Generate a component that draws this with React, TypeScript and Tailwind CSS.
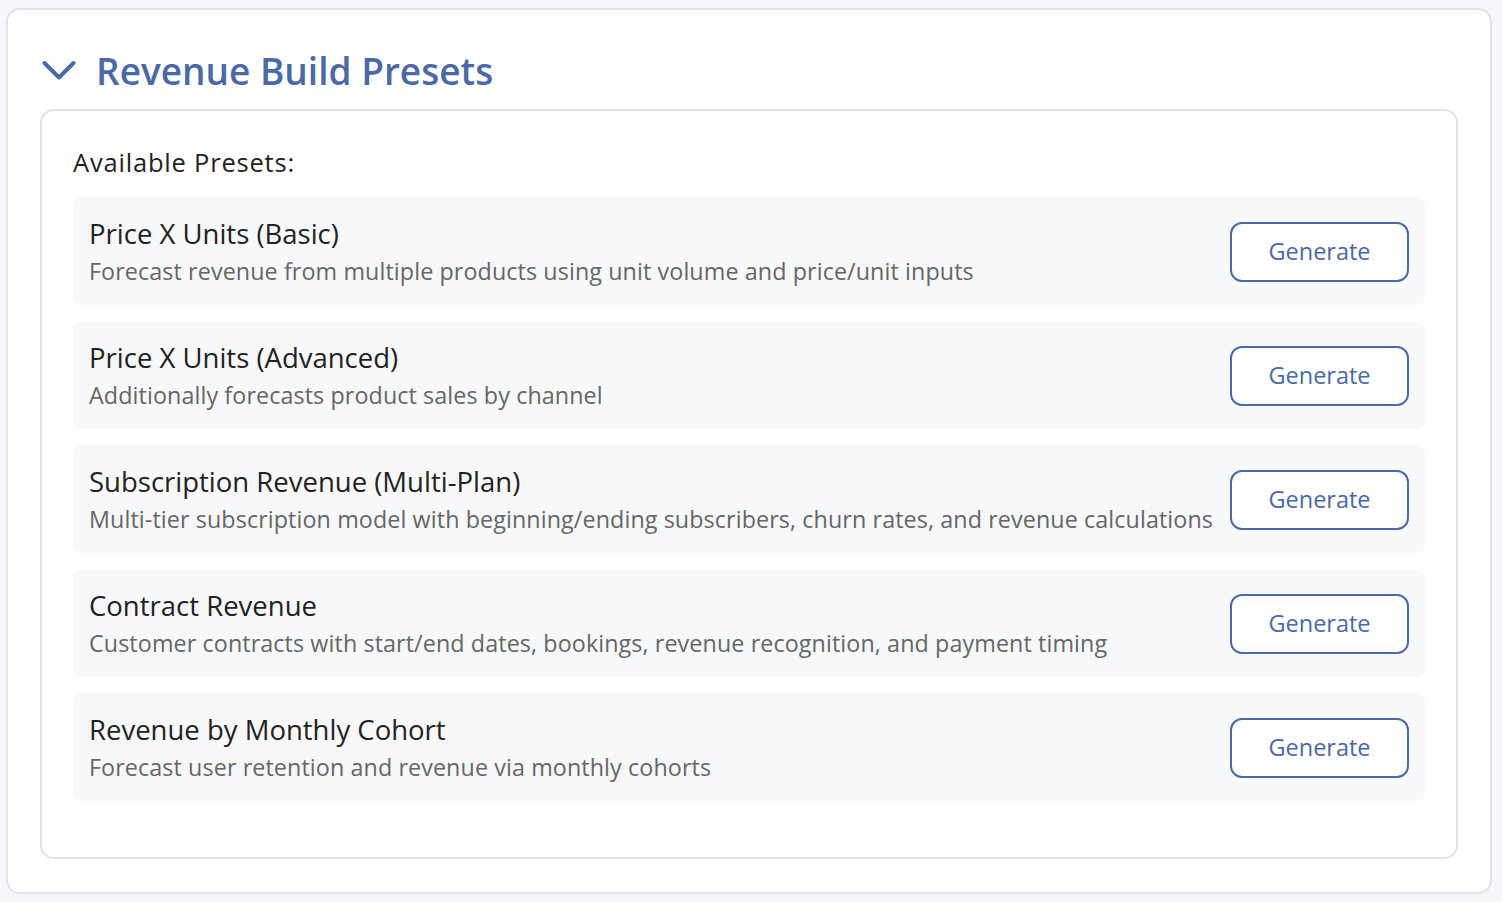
const presets = [
  {
    title: "Price X Units (Basic)",
    desc: "Forecast revenue from multiple products using unit volume and price/unit inputs",
  },
  {
    title: "Price X Units (Advanced)",
    desc: "Additionally forecasts product sales by channel",
  },
  {
    title: "Subscription Revenue (Multi-Plan)",
    desc: "Multi-tier subscription model with beginning/ending subscribers, churn rates, and revenue calculations",
  },
  {
    title: "Contract Revenue",
    desc: "Customer contracts with start/end dates, bookings, revenue recognition, and payment timing",
  },
  {
    title: "Revenue by Monthly Cohort",
    desc: "Forecast user retention and revenue via monthly cohorts",
  },
];

export default function App() {
  return (
    <div
      className="min-h-[902px] bg-[#f6f7fb] pl-[6px] pr-[10px] pt-[8px] pb-[9px]"
      style={{ fontFamily: "'Open Sans', 'Noto Sans', sans-serif" }}
    >
      <div className="rounded-[14px] border-2 border-[#e2e2ee] bg-white px-[32px] pt-[36px] pb-[33px]">
        <div className="flex items-center gap-[20px] pl-[2px]">
          <svg width="34" height="22" viewBox="0 0 34 22" fill="none" className="shrink-0">
            <polyline
              points="2.5,3 17,17.5 31.5,3"
              stroke="#4b69a5"
              strokeWidth="4"
              strokeLinecap="round"
              strokeLinejoin="round"
            />
          </svg>
          <h2 className="text-[37px] font-semibold leading-[50px] text-[#4b69a5]">
            Revenue Build Presets
          </h2>
        </div>

        <div className="mt-[13px] rounded-[14px] border-2 border-[#e2e2ee] bg-white px-[31px] pt-[33px] pb-[56px]">
          <p className="text-[25.5px] leading-[36px] tracking-[0.8px] text-[#222]">Available Presets:</p>
          <div className="mt-[18px] flex flex-col gap-[17px]">
            {presets.map((p) => (
              <div
                key={p.title}
                className="flex h-[107px] items-center gap-4 rounded-[8px] bg-[#f7f8fa] pl-[16px] pr-[16px]"
              >
                <div className="min-w-0 flex-1">
                  <div className="text-[27.5px] leading-[36px] text-[#222]">{p.title}</div>
                  <div className="mt-[3px] whitespace-nowrap text-[23.3px] leading-[32px] tracking-[0.1px] text-[#666]">
                    {p.desc}
                  </div>
                </div>
                <button
                  type="button"
                  className="mt-[1px] h-[60px] w-[179px] shrink-0 rounded-[12px] border-2 border-[#4b69a5] bg-white text-[23.5px] text-[#4b69a5]"
                >
                  Generate
                </button>
              </div>
            ))}
          </div>
        </div>
      </div>
    </div>
  );
}
